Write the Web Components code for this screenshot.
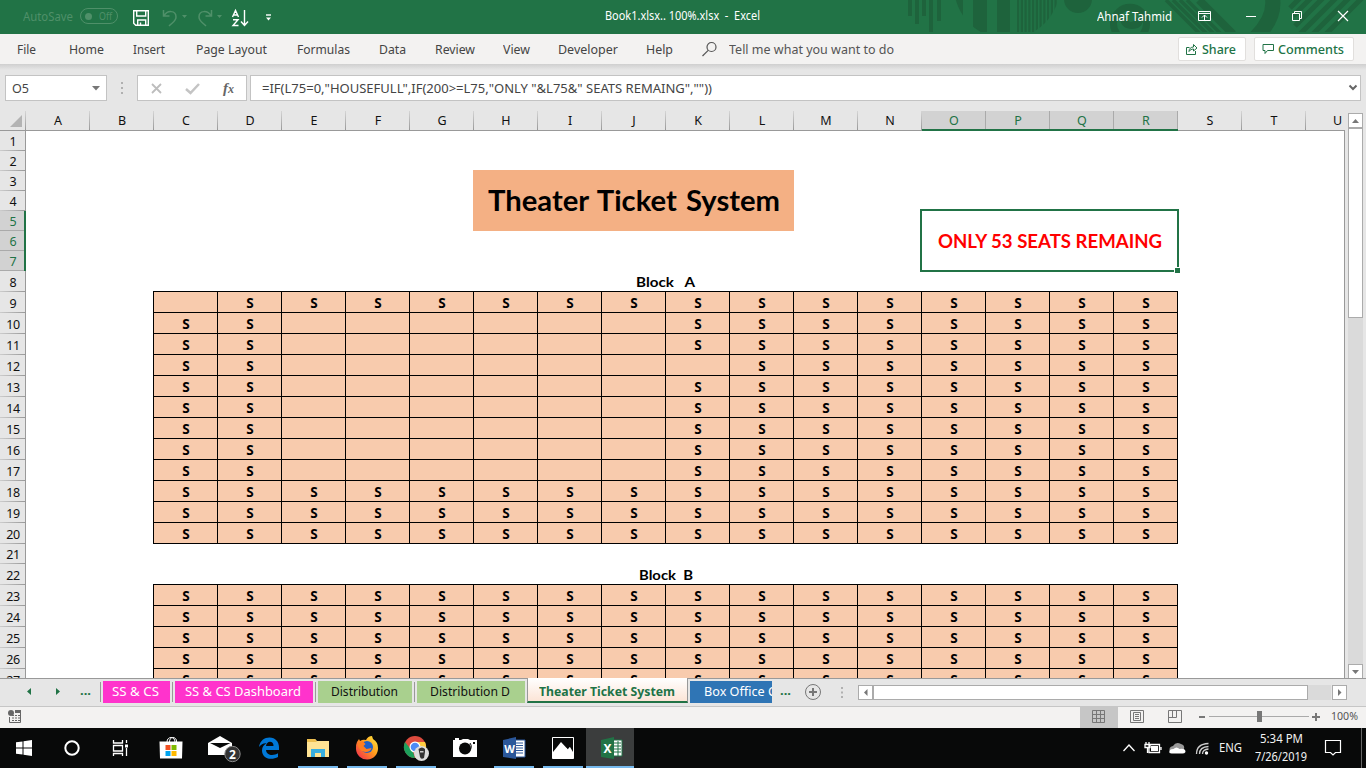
<!DOCTYPE html>
<html lang="en">
<head>
<meta charset="utf-8">
<title>Book1.xlsx.. 100%.xlsx - Excel</title>
<style>
html,body{margin:0;width:1366px;height:768px;overflow:hidden;background:#e6e6e6}
body{font:13px/1 "Noto Sans","Open Sans",sans-serif;color:#444}
</style>
</head>
<body>
<excel-app></excel-app>
<script>
const def = (name, html, after) => customElements.define(name, class extends HTMLElement {
  connectedCallback() {
    if (this.shadowRoot) return;
    const root = this.attachShadow({ mode: 'open' });
    root.innerHTML = typeof html === 'function' ? html(this) : html;
    if (after) after(this, root);
  }
});

/* Text run squeezed or stretched horizontally to the width in "w". */
def('fit-text', el => `<style>
:host{display:block;flex:none;width:${el.getAttribute('w')}px;margin-left:${el.getAttribute('m') || 0}px;white-space:pre;line-height:20px;height:20px}
span{display:inline-block;transform-origin:0 50%;white-space:pre}
</style><span><slot></slot></span>`, (el, root) => {
  const s = root.querySelector('span');
  const w = s.getBoundingClientRect().width;
  if (w) s.style.transform = `scaleX(${+el.getAttribute('w') / w})`;
});

/* ---------- title bar ---------- */
def('title-bar', () => {
  let stripes = '';
  for (let x = 1017; x < 1058; x += 3.75) stripes += `<path d="M${x} 0h2.2v32h-2.2z"/>`;
  return `<style>
:host{display:grid;grid-template-columns:100%;height:34px;background:#217346;color:#fff;font-size:12px}
.art,.row{grid-area:1/1}
.art{justify-self:end;width:460px;height:34px}
.row{display:flex;height:34px;position:relative}
.row>*{flex:none}
.dim{color:#4f9069}
.tog{width:36px;height:14px;border:1px solid #4f9069;border-radius:8px;margin:8px 0 0 7px;display:flex;align-items:center;font-size:10.5px}
.tog i{width:7px;height:7px;border-radius:50%;background:#4f9069;margin-left:4px}
</style>
<svg class="art" viewBox="906 0 460 34" fill="#1e633c">
<clipPath id="c"><circle cx="1007" cy="-14" r="53"/></clipPath><clipPath id="v"><path d="M906 0h460v32h-460z"/></clipPath>
<g clip-path="url(#v)">
<path d="M908 0h4v16h-4zM915 0h4v24h-4zM922 0h4v16h-4zM929 0h4v32h-4zM937 0h4v21h-4z"/>
<g clip-path="url(#c)"><path d="M950 0h13v32h-13zM973 0h14v32h-14zM997 0h13v40h-13z"/>${stripes}</g>
<circle cx="1078" cy="-1" r="14"/>
<path fill="none" stroke="#1e633c" stroke-width="7" d="M1117 34a16.500 16.500 0 1 1 26 0"/>
<path d="M1120 18h6q5 8 10 0h7q0 11-11 11t-12-11z"/>
<g stroke="#1e633c" stroke-width="3.500" fill="none"><path d="M1166 0l34 34M1173 0l34 34M1180 0l34 34M1187 0l34 34"/><path stroke-width="8" d="M1199 0l34 34"/>
<path stroke-width="15" d="M1271-8q8 24-18 48"/>
<path stroke-width="5" d="M1290 8l10-10M1293 16l18-18M1295 26l28-28M1300 34l36-36M1313 34l36-36M1326 34l36-36"/></g>
</g></svg>
<div class="row">
<fit-text class="dim" w="50" m="23" style="margin-top:7px">AutoSave</fit-text>
<div class="tog dim"><i></i><fit-text w="13" m="7">Off</fit-text></div>
<svg width="160" height="34" viewBox="118 0 160 34" fill="none" stroke="#fff" stroke-width="1.400">
<path d="M133.700 10.700h14.600v14.600h-12.600l-2-2z M136.700 11v5h9v-5 M137.700 25v-5h8v5 M140.500 22.500v2"/>
<g stroke="#4f9069" stroke-width="1.500"><path d="M163.500 10v6h6M164 16c3-6 12-6 12 1 0 4-3 5-7 9"/><path d="M211.500 10v6h-6M211 16c-3-6-12-6-12 1 0 4 3 5 7 9"/></g>
<g fill="#4f9069" stroke="none"><path d="M182 15h5l-2.500 3zM217 15h5l-2.500 3z"/></g>
<path d="M232.500 17l3-6.500 3 6.500M233.500 15h4M233 19.700h5l-5 5.800h5.500M244.500 10v15M241 21.500l3.500 4 3.500-4"/>
<path d="M266 15h5"/><path d="M266 17.500h5l-2.500 3z" fill="#fff" stroke="none"/></svg>
<fit-text w="155" m="327" style="margin-top:6px">Book1.xlsx.. 100%.xlsx  -  Excel</fit-text>
<fit-text w="75" m="337" style="margin-top:7px">Ahnaf Tahmid</fit-text>
<svg width="194" height="34" viewBox="1172 0 194 34" fill="none" stroke="#fff">
<path d="M1198.500 11.500h12v9h-12zM1198.500 13.500h12M1204.500 20v-5M1202 17.500l2.500-2.500 2.500 2.500"/>
<path d="M1246 16.500h10"/><path d="M1292.500 13.500h7v7h-7zM1294.500 13v-1.500h7v7h-1.500"/><path d="M1338 11l10 10M1348 11l-10 10" stroke-width="1.200"/></svg>
</div>`;
});

/* ---------- ribbon ---------- */
def('ribbon-button', `<style>
:host{display:flex;box-sizing:border-box;height:24px;background:#fff;border:1px solid #e1dfdd;border-radius:2px;color:#217346;font-weight:500;align-items:center}
</style><slot></slot>`);

def('ribbon-tabs', () => {
  const tabs = [['File',19,17],['Home',35,33],['Insert',32,29],['Page Layout',71,31],['Formulas',53,30],['Data',27,29],['Review',40,29],['View',27,28],['Developer',60,28],['Help',27,28]];
  return `<style>
:host{display:flex;height:30px;background:#f3f2f1;align-items:center;position:relative}
.sh{position:absolute;left:0;right:0;top:30px;height:6px;background:linear-gradient(#cfcfcf,#e6e6e6)}
</style>${tabs.map(t => `<fit-text w="${t[1]}" m="${t[2]}">${t[0]}</fit-text>`).join('')}
<svg width="16" height="16" style="margin-left:29px;flex:none" fill="none" stroke="#555" stroke-width="1.200"><circle cx="9.500" cy="6" r="4.500"/><path d="M6.200 9.300L.5 15"/></svg>
<fit-text w="165" m="11" style="color:#555">Tell me what you want to do</fit-text>
<ribbon-button style="margin-left:284px;width:68px"><svg width="12" height="12" style="margin-left:7px" fill="none" stroke="#217346"><path d="M3.500 4.500h-3v7h9V8M3 8.500c0-3 2-4.500 4.500-4.500V1.500L11 5 7.500 8V6C5.500 6 4 7 3 8.500z"/></svg><fit-text w="34" m="4">Share</fit-text></ribbon-button>
<ribbon-button style="margin-left:8px;width:100px"><svg width="12" height="12" style="margin-left:7px" fill="none" stroke="#217346"><path d="M1 1.500h10.500v6H5.500L3 10.500v-3H1z"/></svg><fit-text w="66" m="4">Comments</fit-text></ribbon-button>
<div class="sh"></div>`;
});

/* ---------- formula bar ---------- */
def('formula-bar', `<style>
:host{display:flex;height:26px;padding:11px 0 10px 5px;font-size:13px}
.b{box-sizing:border-box;height:26px;border:1px solid #c3c3c3;background:#fff;display:flex;align-items:center;flex:none}
svg{flex:none}
</style>
<div class="b" style="width:102px"><fit-text w="17" m="6">O5</fit-text><svg width="10" height="6" style="margin-left:62px"><path d="M1 1h8L5 5.500z" fill="#777"/></svg></div>
<svg width="30" height="26"><path d="M14 7h2v2h-2zM14 12h2v2h-2zM14 17h2v2h-2z" fill="#b0b0b0"/></svg>
<div class="b" style="width:110px"><svg width="108" height="24" fill="none"><path d="M14 8l9 9M23 8l-9 9" stroke="#bdbdbd" stroke-width="1.800"/><path d="M48 13l4.500 4L61 8" stroke="#c4c4c4" stroke-width="2.500"/><text x="85" y="16.500" font-family="Liberation Serif" font-style="italic" font-weight="bold" font-size="15" fill="#666">f</text><text x="90" y="16.500" font-family="Liberation Serif" font-style="italic" font-weight="bold" font-size="12" fill="#666">x</text></svg></div>
<div class="b" style="width:1111px;margin-left:3px"><fit-text w="450" m="11">=IF(L75=0,"HOUSEFULL",IF(200&gt;=L75,"ONLY "&amp;L75&amp;" SEATS REMAING",""))</fit-text><svg width="10" height="8" style="margin-left:636px" fill="none" stroke="#666" stroke-width="2"><path d="M1.500 1.500L5 5l3.500-3.500"/></svg></div>`);

/* ---------- worksheet ---------- */
const ROWS = [...Array(7).fill(20), ...Array(13).fill(21), 20, ...Array(6).fill(21)];

def('column-headers', () => `<style>
:host{display:flex;height:20px;width:1345px;font:12.500px "Noto Sans",sans-serif;color:#111;background:linear-gradient(#999,#999) 0 100%/100% 1px no-repeat}
div{box-sizing:border-box;width:64px;height:20px;line-height:20px;text-align:center;flex:none;background:linear-gradient(#d5d5d5,#999) 100% 0/1px 19px no-repeat}
.k{width:26px}.k svg{display:block;margin-left:10px}
.s{color:#217346;background:linear-gradient(#217346,#217346) 0 100%/100% 2px no-repeat,linear-gradient(#aaa,#aaa) 100% 0/1px 100% no-repeat,#d2d2d2}
.u{width:38px;padding-left:27px;text-align:left;background:none}
</style><div class="k"><svg width="13" height="19"><path d="M12 4v12H0z" fill="#b3b3b3"/></svg></div>${[...'ABCDEFGHIJKLMNOPQRSTU'].map(c => `<div class="${'OPQR'.includes(c) ? 's' : c === 'U' ? 'u' : ''}">${c}</div>`).join('')}`);

def('row-headers', () => `<style>
:host{display:block;width:26px;height:547px;overflow:hidden;font:12.500px "Noto Sans",sans-serif;color:#111;background:linear-gradient(#999,#999) 25px 0/1px 100% no-repeat}
div{box-sizing:border-box;width:26px;text-align:center;letter-spacing:-.4px;background:linear-gradient(90deg,#ccc,#999) 0 100%/25px 1px no-repeat}
.s{color:#217346;background:linear-gradient(#217346,#217346) 100% 0/2px 100% no-repeat,linear-gradient(#aaa,#aaa) 0 100%/100% 1px no-repeat,#d2d2d2}
</style>${ROWS.map((h, i) => `<div class="${i > 3 && i < 7 ? 's' : ''}" style="height:${h}px;line-height:${h === 21 ? 23 : 21}px">${i + 1}</div>`).join('')}`);

/* Seat block: each row string holds S for a sold seat and . for a free one. */
def('seat-block', el => `<style>
:host{display:grid;grid-template-columns:repeat(16,63px);grid-auto-rows:20px;gap:1px;padding:1px;width:1023px;margin:-1px 0 0 -1px;background:#000;align-self:start;font:bold 13.500px "Noto Sans",sans-serif;color:#000}
div{box-sizing:border-box;background:#f8cbad;text-align:center;line-height:23px;height:20px;padding-left:1px}
</style>${el.getAttribute('rows').split(' ').map(r => [...r].map(c => `<div>${c === 'S' ? 'S' : ''}</div>`).join('')).join('')}`);

def('work-sheet', () => {
  const a = ['.SSSSSSSSSSSSSSS'];
  for (let r = 10; r <= 17; r++) a.push(r === 12 ? 'SS.......SSSSSSS' : 'SS......SSSSSSSS');
  a.push(...Array(3).fill('S'.repeat(16)));
  return `<style>
:host{display:grid;box-sizing:border-box;width:1319px;height:547px;overflow:hidden;background:#fff;border-right:1px solid #999;grid-template-columns:repeat(20,64px) 38px;grid-template-rows:${ROWS.map(h => h + 'px').join(' ')};font-family:Lato,sans-serif;font-weight:bold;color:#000}
.m{display:flex;align-items:center;justify-content:center}
.t{grid-area:3/8/6/13;margin:-1px 0 0 -1px;height:60px;padding-bottom:1px;background:#f4b084;font-size:28px;word-spacing:2px}
.o{grid-area:5/15/8/19;position:relative;color:#f00;font-size:18px;margin:-2px -1px -1px -2px;box-sizing:border-box;border:2px solid #217346}
.o i{position:absolute;right:-4px;bottom:-4px;width:5px;height:5px;background:#217346;border:1px solid #fff}
.l{font-size:14px}
</style>
<div class="m t"><fit-text w="292">Theater Ticket System</fit-text></div>
<div class="m o"><fit-text w="224">ONLY 53 SEATS REMAING</fit-text><i></i></div>
<div class="m l" style="grid-area:8/3/9/19;margin-left:-2px"><fit-text w="59">Block   A</fit-text></div>
<seat-block style="grid-area:9/3/21/19" rows="${a.join(' ')}"></seat-block>
<div class="m l" style="grid-area:22/3/23/19"><fit-text w="54">Block  B</fit-text></div>
<seat-block style="grid-area:23/3/28/19" rows="${Array(5).fill('S'.repeat(16)).join(' ')}"></seat-block>`;
});

def('v-scroll', `<style>
:host{display:flex;flex-direction:column;width:15px;margin-left:3px;padding-top:2px;height:566px;box-sizing:content-box}
div{box-sizing:border-box;width:15px;border:1px solid #ababab;background:#fff;height:15px;display:flex;align-items:center;justify-content:center}
.th{height:190px}.tr{flex:1;border:0;background:#dadada}
</style><div><svg width="7" height="4"><path d="M0 4h7L3.500 0z" fill="#777"/></svg></div><div class="th"></div><div class="tr"></div><div><svg width="7" height="4"><path d="M0 0h7L3.500 4z" fill="#777"/></svg></div>`);

/* ---------- sheet tabs ---------- */
def('sheet-tab', el => `<style>
:host{display:block;flex:none;height:22px;margin-left:3px;width:${el.getAttribute('width')}px;background:${el.getAttribute('color')};position:relative;overflow:hidden;color:${el.getAttribute('ink') || '#fff'}}
</style><slot></slot>`);

def('sheet-tabs', `<style>
:host{display:flex;height:28px;box-sizing:border-box;border-top:1px solid #999;font-size:13px;align-items:flex-start}
:host>*{flex:none}
sheet-tab{margin-top:2px}
hr{border:0;margin:3px 0 0;width:1px;height:20px;background:#999}
.act{width:161px;height:25px;box-sizing:border-box;border:1px solid #999;border-width:0 1px 2px;border-bottom-color:#217346;background:linear-gradient(#fff,#fce4d6);margin:-1px 0 0 2px;color:#217346;font-weight:bold}
.e{color:#217346;font-weight:bold}
.b{box-sizing:border-box;height:15px;border:1px solid #ababab;background:#fff;margin-top:6px}
</style>
<svg width="75" height="27"><path d="M31 9v7l-4-3.500zM56 9v7l4-3.500z" fill="#217346"/></svg>
<fit-text class="e" w="11" m="5" style="margin-top:1px">...</fit-text>
<hr style="margin-left:9px"><sheet-tab width="67" color="#ff33cc" style="margin-left:2px"><fit-text w="47" m="9">SS &amp; CS</fit-text></sheet-tab>
<hr style="margin-left:2px"><sheet-tab width="138" color="#ff33cc" style="margin-left:2px"><fit-text w="116" m="10">SS &amp; CS Dashboard</fit-text></sheet-tab>
<hr style="margin-left:2px"><sheet-tab width="94" color="#a9d08e" ink="#111" style="margin-left:2px"><fit-text w="67" m="13">Distribution</fit-text></sheet-tab>
<hr style="margin-left:2px"><sheet-tab width="108" color="#a9d08e" ink="#111" style="margin-left:2px"><fit-text w="80" m="13">Distribution D</fit-text></sheet-tab>
<div class="act"><fit-text w="136" m="11" style="margin-top:3px">Theater Ticket System</fit-text></div>
<sheet-tab width="82" color="#2f75b5" style="margin-left:2px"><fit-text w="72" m="14">Box Office C</fit-text></sheet-tab>
<fit-text class="e" w="11" m="8" style="margin-top:1px">...</fit-text>
<svg width="67" height="27" fill="none" stroke="#777"><circle cx="22" cy="13" r="7.500"/><path d="M18 13h8M22 9v8" stroke-width="2"/><path d="M50 8h2v2h-2zM50 12.500h2v2h-2zM50 17h2v2h-2z" fill="#b0b0b0" stroke="none"/></svg>
<div class="b" style="width:15px"><svg width="13" height="13" style="display:block"><path d="M8.500 3v7L5 6.500z" fill="#777"/></svg></div>
<div class="b" style="width:435px"></div><div class="b" style="width:23px;border:0;background:#dadada"></div>
<div class="b" style="width:15px;margin-left:1px"><svg width="13" height="13" style="display:block"><path d="M5 3v7l3.500-3.500z" fill="#777"/></svg></div>`);

/* ---------- status bar ---------- */
def('status-bar', `<style>
:host{display:flex;height:22px;box-sizing:border-box;border-top:1px solid #c6c6c6;background:#f3f2f1;font-size:11.500px;color:#555}
svg{display:block;flex:none}
</style>
<svg width="1080" height="21" fill="none" stroke="#666"><circle cx="11" cy="6" r="3" fill="#666" stroke="none"/><path d="M15 4.500h6" stroke-width="3"/><path d="M9.500 10v5.500h11V4" /><path d="M12 8.500h8M12 11h8M12 13.500h8" stroke-dasharray="2 1"/></svg>
<svg width="117" height="21" fill="none" stroke="#777"><path d="M0 0h38v21H0z" fill="#c6c6c6" stroke="none"/>
<path d="M12.500 3.500h12v12h-12zM12.500 7.500h12M12.500 11.500h12M16.500 3.500v12M20.500 3.500v12"/>
<path d="M50.500 3.500h13v12h-13zM53.500 5.500h7v8h-7zM55 7.500h4M55 9.500h4M55 11.500h4"/><path d="M88.500 3.500h13v12h-13zM88.500 10.500h8v-7M92.500 10v-6.500"/></svg>
<svg width="134" height="21"><path d="M2 9h6v2H2zM115 9h8v2h-8zM118 6h2v8h-2zM60 4h5v11h-5z" fill="#777"/><path d="M12 9.500h48M65 9.500h47" stroke="#aaa"/></svg>
<fit-text w="27" style="margin-top:-1px">100%</fit-text>`);

/* ---------- taskbar ---------- */
def('task-item', el => `<style>
:host{display:flex;flex:none;box-sizing:border-box;width:49px;height:40px;align-items:center;justify-content:center;background:${el.hasAttribute('active') ? 'linear-gradient(#76b9ed,#76b9ed) 0 100%/100% 2px no-repeat #3b3d3d' : el.hasAttribute('open') ? 'linear-gradient(#76b9ed,#76b9ed) 50% 100%/40px 2px no-repeat' : 'none'}}
</style><slot></slot>`);

def('task-bar', `<style>
:host{display:flex;height:40px;background:#080909;color:#f2f2f2;font-size:12px;align-items:center}
svg{display:block;flex:none}
.n{width:48px}.tray{display:flex;align-items:center;margin-left:487px}
</style>
<task-item class="n"><svg width="16" height="16" fill="#fff"><path d="M0 2.300L6.500 1.400v6.100H0zM7.500 1.200L16 0v7.500H7.500zM0 8.500h6.500v6.100L0 13.700zM7.500 8.500H16V16l-8.500-1.200z"/></svg></task-item>
<task-item class="n"><svg width="16" height="16" fill="none" stroke="#fff" stroke-width="2"><circle cx="8" cy="8" r="6.700"/></svg></task-item>
<task-item class="n"><svg width="18" height="16" fill="none" stroke="#fff" stroke-width="1.300"><path d="M2.500 0v3h9V0M2.500 5.500h9v5.500h-9zM2.500 16v-2.500h9V16M15.500 0v3M15.500 8v8"/><path d="M14 4.500h3v3h-3z" fill="#fff" stroke="none"/></svg></task-item>
<task-item style="margin-left:2px"><svg width="24" height="24"><path d="M0.500 5.500h23L23 22.500H1z" fill="#fff"/><path d="M8 6c0-6 8-6 8 0M10.500 6c0-7 8-5 7 0" fill="none" stroke="#fff"/><path d="M6.500 9h5v5h-5z" fill="#f25022"/><path d="M12.500 9h5v5h-5z" fill="#7fba00"/><path d="M6.500 15h5v5h-5z" fill="#00a4ef"/><path d="M12.500 15h5v5h-5z" fill="#ffb900"/></svg></task-item>
<task-item><svg width="36" height="30" style="margin-left:9px"><path d="M2 10L14 3l12 7v12H2z" fill="#fff"/><path d="M4 10h20.500L14 15z" fill="#080909"/><circle cx="26.500" cy="21" r="7.700" fill="#333" stroke="#888"/><text x="26.500" y="25.500" text-anchor="middle" font-size="12" font-weight="bold" fill="#fff">2</text></svg></task-item>
<task-item><svg width="22" height="22" viewBox="0 0 22 22"><path d="M1 10C2 3.500 6.500.5 11.500.5 17.500.5 21 5 21 10v3H8c.3 3.500 3 5 6 5 2.300 0 4.300-.6 6-1.700V20c-2 1.200-4.500 1.800-7 1.800-5.500 0-9-3.500-9-8.300 0-3.500 2-6 4.500-7.200C5.500 6 3 7.300 1 10zM8 9h7.500c0-3-1.500-4.300-3.500-4.300S8.300 6.300 8 9z" fill="#0078d7"/></svg></task-item>
<task-item open><svg width="22" height="20"><path d="M0 1h8l2 2h12v16H0z" fill="#ffe394"/><path d="M0 1h8l2 3H0z" fill="#eebf50"/><path d="M4 11h14v8h-4v-4H8v4H4z" fill="#38aee0"/></svg></task-item>
<task-item open><svg width="24" height="24"><defs><linearGradient id="f" x1="1" y1="0" x2="0" y2="1"><stop offset="0" stop-color="#fff044"/><stop offset=".45" stop-color="#ff9a1c"/><stop offset="1" stop-color="#f01f55"/></linearGradient></defs><path d="M2 6l2-3 1 2q3-2 6-1 2-4 6-4l1 3q5 3 5 9a11 11 0 0 1-22 1q-.500-4 1-7z" fill="url(#f)"/><circle cx="12" cy="11" r="6" fill="#2060c8"/><path d="M2.500 8l5-3 3 3-2 2 3 3 5-1c-1 5-10 6-13-1z" fill="#ff7d20"/></svg></task-item>
<task-item open><svg width="26" height="26"><circle cx="12" cy="12" r="11" fill="#dd4b3e"/><path d="M2 7l8 10 2 6A11 11 0 0 1 2 7z" fill="#1da05c"/><path d="M12 7h10a11 11 0 0 1-10 16l5-9z" fill="#ffcd40"/><circle cx="12" cy="12" r="5.500" fill="#fff"/><circle cx="12" cy="12" r="4.300" fill="#4c8bf5"/><circle cx="18.500" cy="18.500" r="7.500" fill="#ddd"/><path d="M15.500 14q3.500-3 6.500 0v3l-1 6q-3 2-4-1z" fill="#333"/><path d="M17 16h3.500v1.500H17z" fill="#ccc"/></svg></task-item>
<task-item><svg width="24" height="20"><path d="M0 2h2V0h4v2h2l2-1h5l2 1h7v17H0z" fill="#fff"/><circle cx="12" cy="10.500" r="6" fill="#080909"/><path d="M16 14q4-5 1-9" stroke="#080909" stroke-width="1" fill="none"/><path d="M20 4h2v2h-2z" fill="#080909"/></svg></task-item>
<task-item open><svg width="24" height="22"><path d="M12 3h11v17H12z" fill="#fff" stroke="#2b579a"/><path d="M13 6h8M13 8.500h8M13 11h8M13 13.500h8M13 16h8" stroke="#2b579a"/><path d="M1 3l13-3v22L1 20z" fill="#2b579a"/><text x="7.500" y="15.500" text-anchor="middle" font-size="11" font-weight="bold" fill="#fff">W</text></svg></task-item>
<task-item open><svg width="22" height="22"><path d="M.5.5h21v21H.5z" fill="#fff" stroke="#fff"/><path d="M1 1h20v14l-3-5-2 2.500L9 5 1 15z" fill="#080909"/><path d="M14 11l2 3 1.500-3.500" stroke="#fff" fill="none"/></svg></task-item>
<task-item active style="width:48px;margin-left:-1px;padding-left:3px"><svg width="24" height="22"><path d="M12 3h10v16H12z" fill="#fff" stroke="#217346"/><path d="M13 6h8M13 9h8M13 12h8M13 15h8M18 4v15" stroke="#217346"/><path d="M1 3l13-3v22L1 20z" fill="#217346"/><text x="7.500" y="15.500" text-anchor="middle" font-size="12" font-weight="bold" fill="#fff">X</text></svg></task-item>
<div class="tray">
<svg width="98" height="40" viewBox="1121 0 98 40" fill="none" stroke="#fff" stroke-width="1.300"><path d="M1123.500 23l5.500-6 5.500 6"/>
<path d="M1149 16.500h10.500v8h-10.500zM1161 19v3M1146 14v3M1149 14v3M1145 16.500h5v3h-5zM1147.500 20v5"/><path d="M1151 18h7v5h-7z" fill="#fff" stroke="none"/>
<path d="M1170 24q-2-5 3-6 3-5 8-2 4 1 3 5l-2 4z" fill="#999" stroke="none"/><path d="M1169.500 25q-1-4 4-4 3-3 6 0 6-1 6 3-1 1.500-3 1.500h-11z" fill="#fff" stroke="none"/>
<path d="M1196.500 26q0-10 12-10.500M1199.500 26q0-7 9-7.500M1202.500 26q0-4.500 6-5" stroke="#ccc"/><circle cx="1206.500" cy="25" r="1.700" fill="#fff" stroke="none"/></svg>
<fit-text w="23">ENG</fit-text>
<div style="width:53px;margin-left:13px;height:38px"><fit-text w="43" m="5" style="height:18px">5:34 PM</fit-text><fit-text w="52">7/26/2019</fit-text></div>
<svg width="58" height="40" viewBox="1308 0 58 40" fill="none" stroke="#fff" stroke-width="1.200"><path d="M1325.500 12.500h15v12h-5l-2.500 2.500-2.500-2.500h-5z"/><path d="M1361.500 0v40" stroke="#666" stroke-width="1"/></svg>
</div>`);

/* ---------- window ---------- */
def('excel-app', `<style>
:host{display:flex;flex-direction:column;width:1366px;height:768px;overflow:hidden;background:#e6e6e6}
:host>*{flex:none}
.main{display:flex;height:567px}.body{display:flex}
</style>
<title-bar></title-bar><ribbon-tabs></ribbon-tabs><formula-bar></formula-bar>
<div class="main"><div><column-headers></column-headers><div class="body"><row-headers></row-headers><work-sheet></work-sheet></div></div><v-scroll></v-scroll></div>
<sheet-tabs></sheet-tabs><status-bar></status-bar><task-bar></task-bar>`);
</script>
</body>
</html>
